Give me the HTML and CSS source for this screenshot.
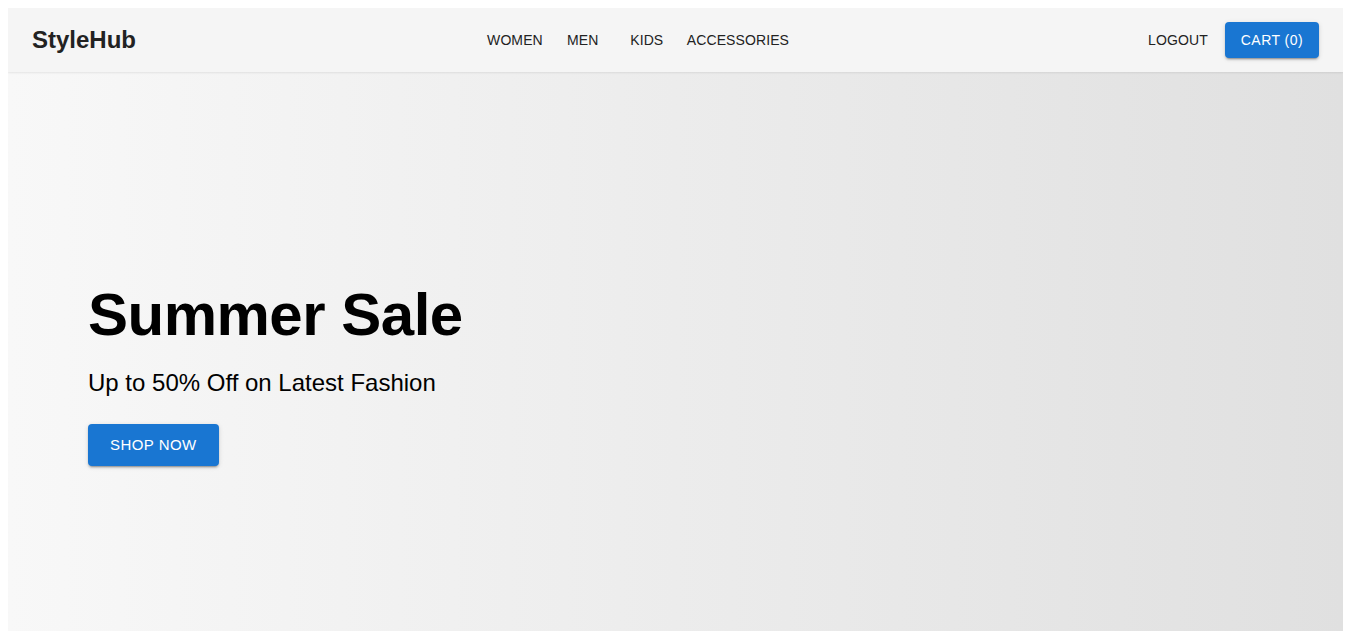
FILE: index.html
```html
<!DOCTYPE html>
<html lang="en">
<head>
<meta charset="utf-8">
<title>StyleHub</title>
<link rel="stylesheet" href="styles.css">
</head>
<body>
<header class="appbar">
  <div class="toolbar">
    <div class="brand">StyleHub</div>
    <nav class="nav">
      <a class="btn-text" href="#">WOMEN</a>
      <a class="btn-text" href="#">MEN</a>
      <a class="btn-text" href="#">KIDS</a>
      <a class="btn-text" href="#">ACCESSORIES</a>
    </nav>
    <div class="actions">
      <a class="btn-text" href="#">LOGOUT</a>
      <a class="btn-contained" href="#">CART (0)</a>
    </div>
  </div>
</header>
<section class="hero">
  <div class="hero-content">
    <h1 class="hero-title">Summer Sale</h1>
    <p class="hero-sub">Up to 50% Off on Latest Fashion</p>
    <a class="btn-contained btn-large" href="#">SHOP NOW</a>
  </div>
</section>
</body>
</html>
```
FILE: styles.css
```css
* { box-sizing: border-box; }
html, body { background: #fff; }
body {
  margin: 8px 6px 8px 8px;
  font-family: "Liberation Sans", Arial, sans-serif;
  color: rgba(0,0,0,0.87);
}
a { text-decoration: none; }

.appbar {
  position: relative;
  z-index: 2;
  background: #f5f5f5;
  box-shadow: 0 1px 2px 0 rgba(0,0,0,0.06), 0 0 3px 0 rgba(0,0,0,0.05);
}
.toolbar {
  display: flex;
  align-items: center;
  height: 64px;
  padding: 0 24px;
}
.brand {
  flex: 1 1 auto;
  font-family: "Liberation Sans", Arial, sans-serif;
  font-weight: 700;
  font-size: 24px;
  color: #222;
}
.nav {
  display: flex;
}
.actions {
  flex: 1 1 auto;
  display: flex;
  justify-content: flex-end;
  align-items: center;
  gap: 9px;
}
.btn-text {
  display: inline-flex;
  justify-content: center;
  min-width: 64px;
  padding: 6px 8px;
  font-family: "Liberation Sans", Arial, sans-serif;
  font-weight: 400;
  font-size: 14px;
  line-height: 24.5px;
  letter-spacing: 0.1px;
  color: #222;
}
.btn-contained {
  display: inline-flex;
  justify-content: center;
  min-width: 64px;
  padding: 6px 16px;
  font-family: "Liberation Sans", Arial, sans-serif;
  font-weight: 400;
  font-size: 14px;
  line-height: 24px;
  letter-spacing: 0.45px;
  color: #fff;
  background: #1976d2;
  border-radius: 4px;
  box-shadow: 0 3px 1px -2px rgba(0,0,0,0.2), 0 2px 2px 0 rgba(0,0,0,0.14), 0 1px 5px 0 rgba(0,0,0,0.12);
}
.btn-large {
  padding: 8px 22px;
  font-size: 15px;
  line-height: 26px;
}

.hero {
  height: 600px;
  display: flex;
  align-items: center;
  padding: 0 80px;
  background: linear-gradient(to right, #f8f8f8, #e0e0e0);
}
.hero-content {
  display: flex;
  flex-direction: column;
  align-items: flex-start;
}
.hero-title {
  margin: 0 0 16px;
  font-family: "Liberation Sans", Arial, sans-serif;
  font-weight: 700;
  font-size: 60px;
  line-height: 72px;
  letter-spacing: -0.5px;
  color: #000;
}
.hero-sub {
  margin: 0 0 25px;
  font-family: "Liberation Sans", Arial, sans-serif;
  font-size: 24px;
  line-height: 32px;
  color: #000;
}
```
